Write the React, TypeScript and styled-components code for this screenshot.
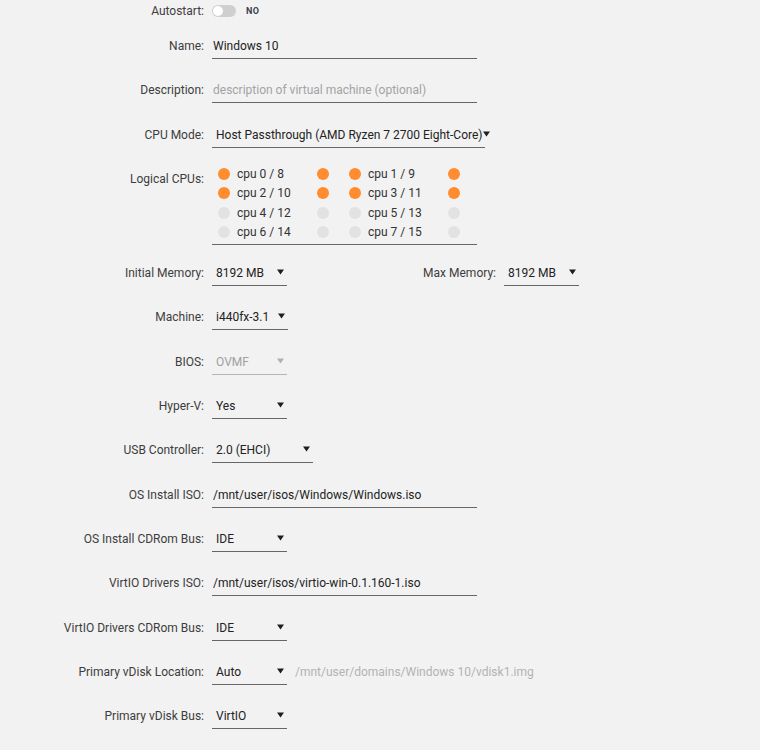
import React from "react";
import styled, { createGlobalStyle } from "styled-components";

const GlobalStyle = createGlobalStyle`
  html, body {
    margin: 0;
    padding: 0;
    background: #f2f2f2;
  }
  body {
    font-family: Roboto, "Liberation Sans", Arial, sans-serif;
    font-size: 12px;
    color: #222;
  }
`;

const Form = styled.div`
  display: flex;
  flex-direction: column;
  width: 760px;
  min-height: 750px;
`;

const Row = styled.div<{ $h?: number }>`
  display: flex;
  align-items: flex-start;
  flex-shrink: 0;
  height: ${(p) => p.$h ?? 44.33}px;
`;

const Label = styled.div<{ $w?: number; $lh?: number }>`
  flex-shrink: 0;
  width: ${(p) => p.$w ?? 204}px;
  margin-right: 8px;
  text-align: right;
  white-space: nowrap;
  line-height: ${(p) => p.$lh ?? 28}px;
  color: #3d3d3d;
`;

const ToggleWrap = styled.div`
  display: flex;
  align-items: center;
  height: 22px;
`;

const Switch = styled.span`
  display: flex;
  align-items: center;
  box-sizing: border-box;
  width: 24px;
  height: 12px;
  padding: 0 1px;
  border-radius: 6px;
  background: #cfcfcf;
`;

const Knob = styled.span`
  width: 10px;
  height: 10px;
  border-radius: 50%;
  background: #fff;
`;

const SwitchText = styled.span`
  margin-left: 10px;
  font-size: 9px;
  font-weight: 700;
  letter-spacing: 0.3px;
  color: #39414d;
`;

const TextField = styled.input`
  box-sizing: content-box;
  width: 264px;
  height: 24px;
  padding: 2px 0 0 1px;
  margin: 0;
  border: none;
  border-bottom: 1px solid #666;
  background: transparent;
  font: inherit;
  color: #222;
  outline: none;
  &::placeholder {
    color: #a3a3a3;
  }
`;

const Select = styled.div<{ $w: number; $disabled?: boolean }>`
  display: flex;
  align-items: center;
  justify-content: space-between;
  box-sizing: border-box;
  width: ${(p) => p.$w}px;
  height: 27px;
  padding: 2px 3px 0 4px;
  border-bottom: 1px solid ${(p) => (p.$disabled ? "#b5b5b5" : "#666")};
  color: ${(p) => (p.$disabled ? "#a0a0a0" : "#222")};
  white-space: nowrap;
`;

const ArrowIcon = styled.svg`
  flex-shrink: 0;
  margin-top: -2px;
`;

const Arrow = ({ muted }: { muted?: boolean }) => (
  <ArrowIcon width="7" height="6" viewBox="0 0 7 6">
    <polygon points="0,0.5 7,0.5 3.5,5.5" fill={muted ? "#b0b0b0" : "#1e1e1e"} />
  </ArrowIcon>
);

const Dropdown = ({ value, w, disabled }: { value: string; w: number; disabled?: boolean }) => (
  <Select $w={w} $disabled={disabled}>
    <span>{value}</span>
    <Arrow muted={disabled} />
  </Select>
);

const CpuGrid = styled.div`
  display: grid;
  grid-template-columns: 111px 111px;
  grid-auto-rows: 19.5px;
  column-gap: 20px;
  box-sizing: border-box;
  width: 265px;
  margin-top: -1px;
  padding: 0 0 2px 6px;
  border-bottom: 1px solid #666;
`;

const CpuPair = styled.div`
  display: flex;
  align-items: center;
`;

const Dot = styled.span<{ $on: boolean }>`
  flex-shrink: 0;
  width: 12px;
  height: 12px;
  border-radius: 50%;
  background: ${(p) => (p.$on ? "#ff8c2f" : "#e2e2e2")};
`;

const CpuName = styled.span`
  width: 80px;
  margin-left: 7px;
  color: #333;
  white-space: nowrap;
`;

const PathHint = styled.span`
  margin-left: 8px;
  line-height: 28px;
  color: #b3b3b3;
  white-space: nowrap;
`;

const cpus = [
  { name: "cpu 0 / 8", on: true },
  { name: "cpu 1 / 9", on: true },
  { name: "cpu 2 / 10", on: true },
  { name: "cpu 3 / 11", on: true },
  { name: "cpu 4 / 12", on: false },
  { name: "cpu 5 / 13", on: false },
  { name: "cpu 6 / 14", on: false },
  { name: "cpu 7 / 15", on: false },
];

export default function App() {
  return (
    <>
      <GlobalStyle />
      <Form>
        <Row $h={32}>
          <Label $lh={22}>Autostart:</Label>
          <ToggleWrap>
            <Switch>
              <Knob />
            </Switch>
            <SwitchText>NO</SwitchText>
          </ToggleWrap>
        </Row>

        <Row>
          <Label>Name:</Label>
          <TextField defaultValue="Windows 10" readOnly />
        </Row>

        <Row>
          <Label>Description:</Label>
          <TextField placeholder="description of virtual machine (optional)" readOnly />
        </Row>

        <Row>
          <Label>CPU Mode:</Label>
          <Dropdown w={273} value="Host Passthrough (AMD Ryzen 7 2700 Eight-Core)" />
        </Row>

        <Row $h={94}>
          <Label>Logical CPUs:</Label>
          <CpuGrid>
            {cpus.map((c) => (
              <CpuPair key={c.name}>
                <Dot $on={c.on} />
                <CpuName>{c.name}</CpuName>
                <Dot $on={c.on} />
              </CpuPair>
            ))}
          </CpuGrid>
        </Row>

        <Row>
          <Label>Initial Memory:</Label>
          <Dropdown w={75} value="8192 MB" />
          <Label $w={209}>Max Memory:</Label>
          <Dropdown w={75} value="8192 MB" />
        </Row>

        <Row>
          <Label>Machine:</Label>
          <Dropdown w={76} value="i440fx-3.1" />
        </Row>

        <Row>
          <Label>BIOS:</Label>
          <Dropdown w={75} value="OVMF" disabled />
        </Row>

        <Row>
          <Label>Hyper-V:</Label>
          <Dropdown w={75} value="Yes" />
        </Row>

        <Row>
          <Label>USB Controller:</Label>
          <Dropdown w={101} value="2.0 (EHCI)" />
        </Row>

        <Row>
          <Label>OS Install ISO:</Label>
          <TextField defaultValue="/mnt/user/isos/Windows/Windows.iso" readOnly />
        </Row>

        <Row>
          <Label>OS Install CDRom Bus:</Label>
          <Dropdown w={75} value="IDE" />
        </Row>

        <Row>
          <Label>VirtIO Drivers ISO:</Label>
          <TextField defaultValue="/mnt/user/isos/virtio-win-0.1.160-1.iso" readOnly />
        </Row>

        <Row>
          <Label>VirtIO Drivers CDRom Bus:</Label>
          <Dropdown w={75} value="IDE" />
        </Row>

        <Row>
          <Label>Primary vDisk Location:</Label>
          <Dropdown w={75} value="Auto" />
          <PathHint>/mnt/user/domains/Windows 10/vdisk1.img</PathHint>
        </Row>

        <Row>
          <Label>Primary vDisk Bus:</Label>
          <Dropdown w={75} value="VirtIO" />
        </Row>
      </Form>
    </>
  );
}
